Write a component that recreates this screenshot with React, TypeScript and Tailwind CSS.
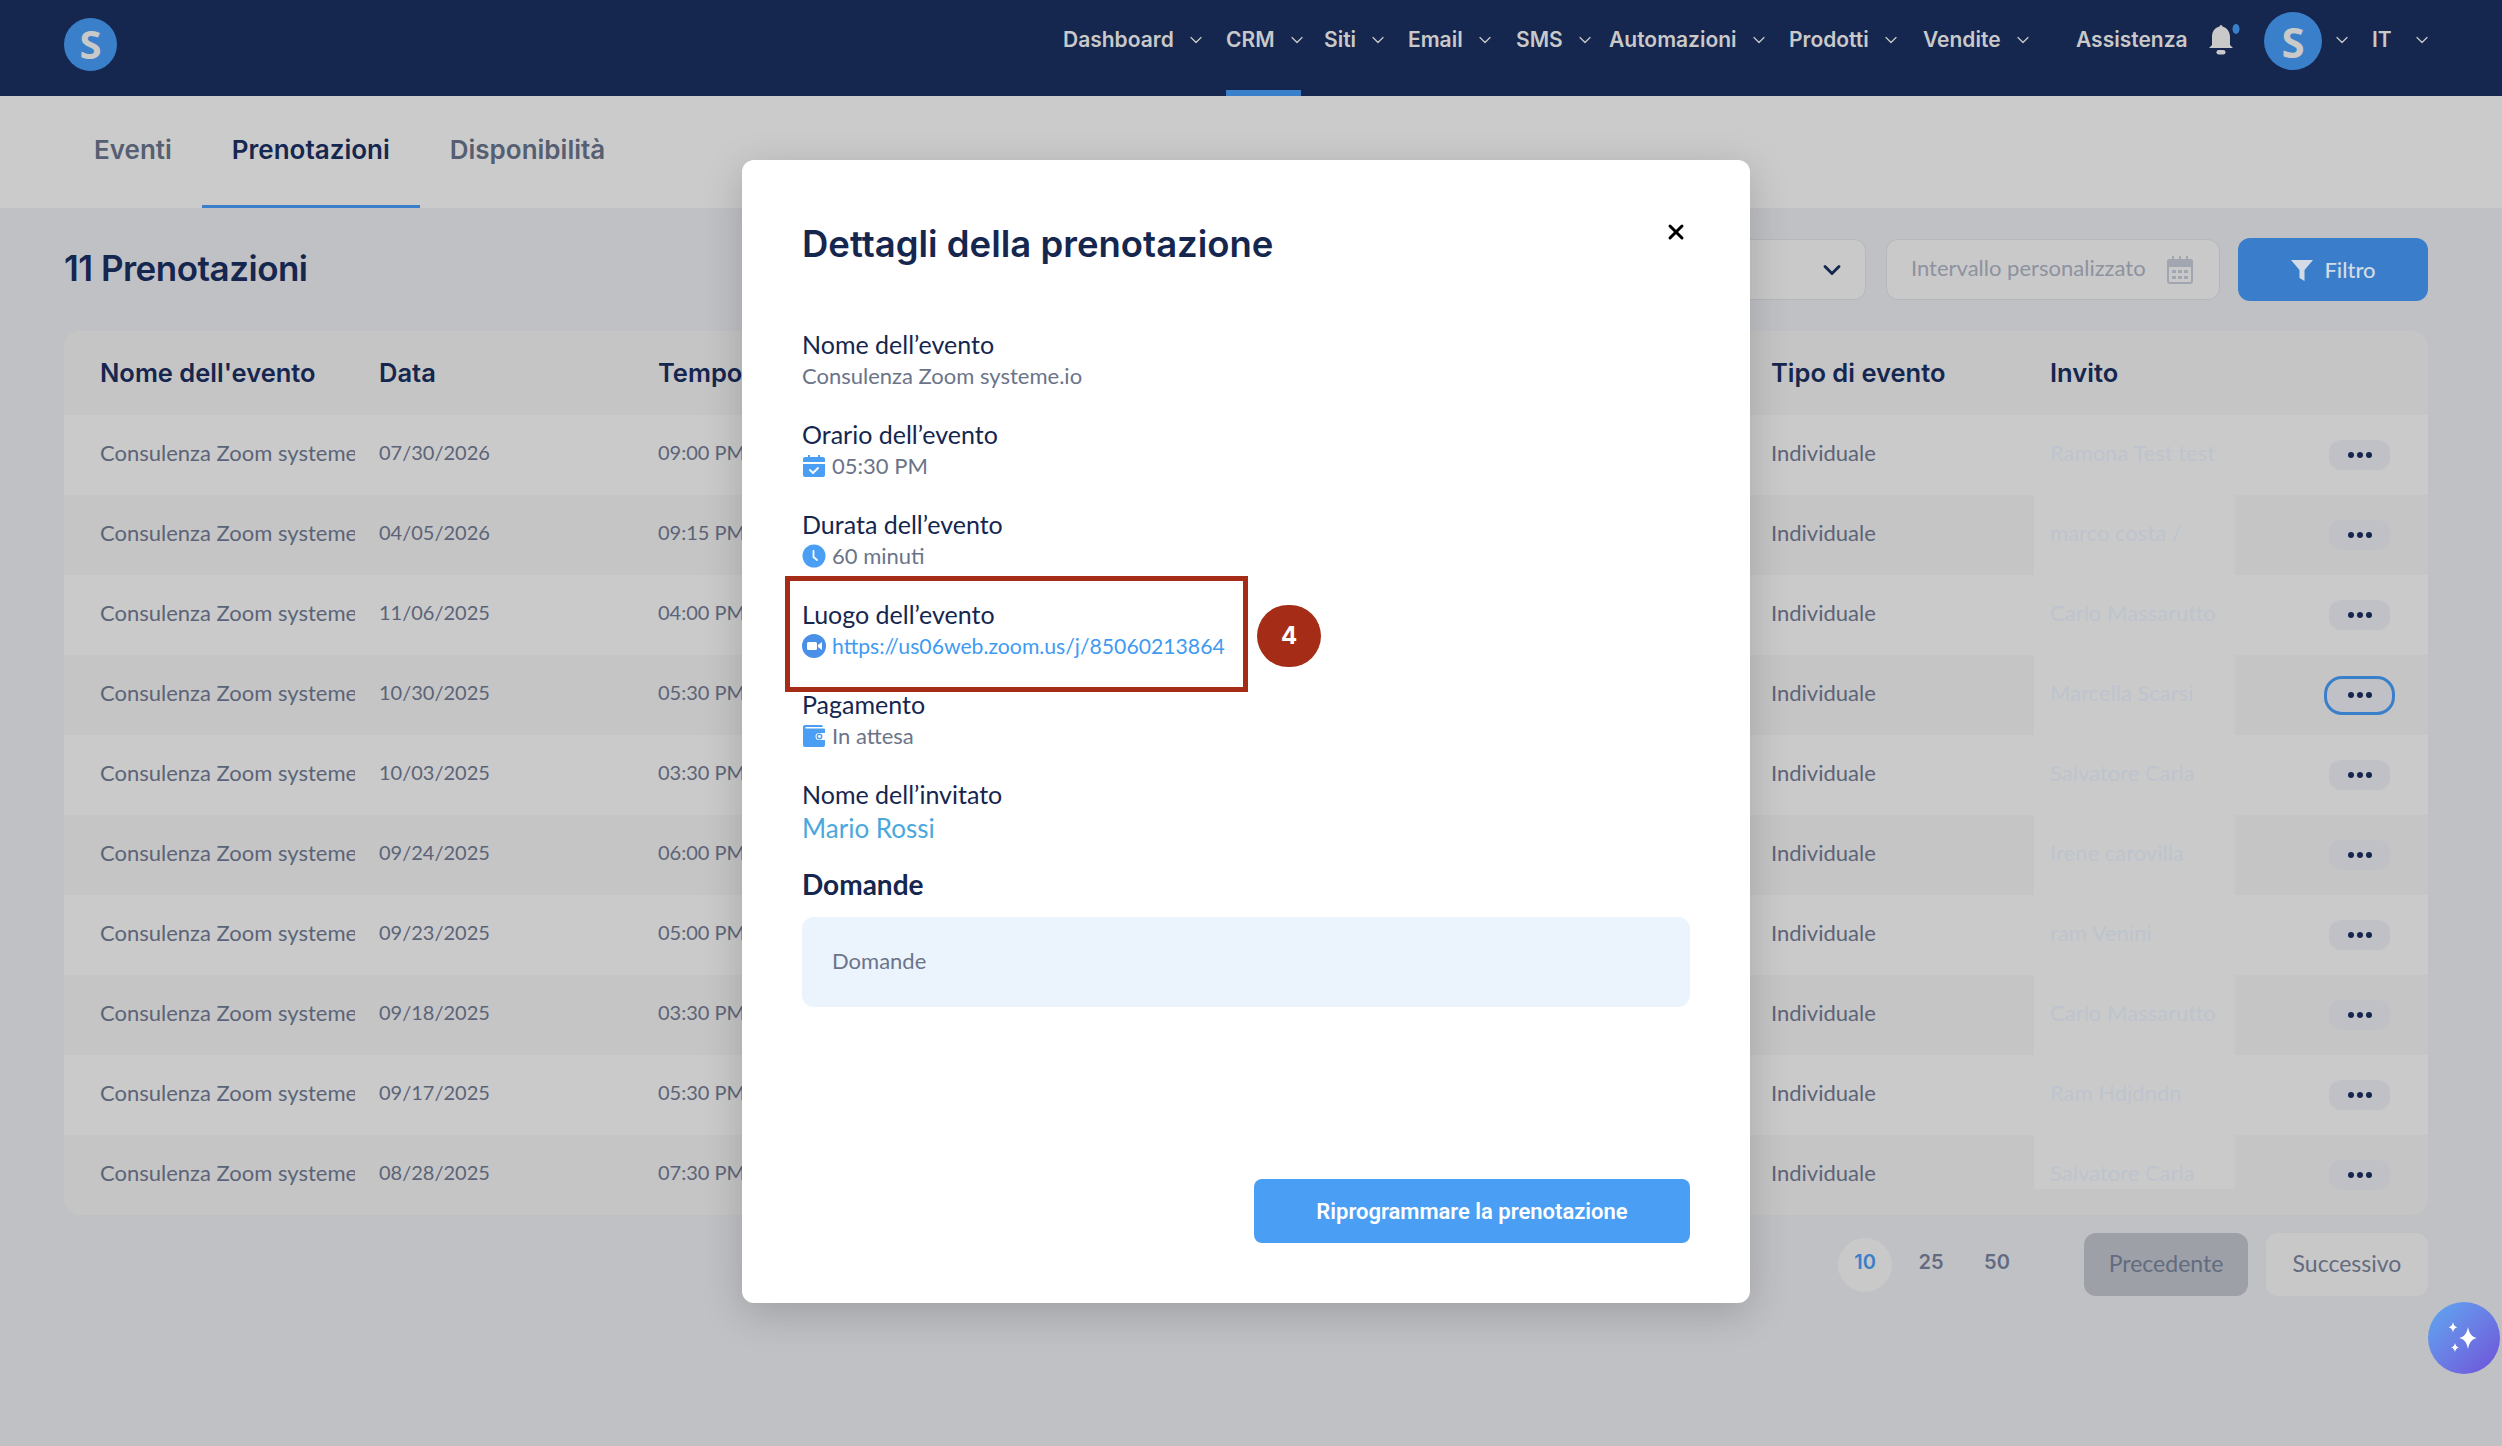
import React from "react";
import { ChevronDown, X } from "lucide-react";

const navItems = [
  { label: "Dashboard", width: "w-[163px]" },
  { label: "CRM", width: "w-[98px]", active: true },
  { label: "Siti", width: "w-[84px]" },
  { label: "Email", width: "w-[108px]" },
  { label: "SMS", width: "w-[93px]" },
  { label: "Automazioni", width: "w-[180px]" },
  { label: "Prodotti", width: "w-[134px]" },
  { label: "Vendite", width: "w-[153px]" },
];

const rows = [
  { date: "07/30/2026", time: "09:00 PM", guest: "Ramona Test test" },
  { date: "04/05/2026", time: "09:15 PM", guest: "marco costa /" },
  { date: "11/06/2025", time: "04:00 PM", guest: "Carlo Massarutto" },
  { date: "10/30/2025", time: "05:30 PM", guest: "Marcella Scarsi", focused: true },
  { date: "10/03/2025", time: "03:30 PM", guest: "Salvatore Carla" },
  { date: "09/24/2025", time: "06:00 PM", guest: "Irene carovilla" },
  { date: "09/23/2025", time: "05:00 PM", guest: "ram Venini" },
  { date: "09/18/2025", time: "03:30 PM", guest: "Carlo Massarutto" },
  { date: "09/17/2025", time: "05:30 PM", guest: "Ram Hdjdndn" },
  { date: "08/28/2025", time: "07:30 PM", guest: "Salvatore Carla" },
];

const rowGrid = "grid grid-cols-[315px_279px_1113px_263px_201px_1fr]";
const heading = "font-['Inter',sans-serif]";

function CalendarCheck() {
  return (
    <svg viewBox="0 0 24 24" className="w-[24px] h-[24px] shrink-0">
      <path d="M6 1h2v3H6zM16 1h2v3h-2z" fill="#4a9ff5" />
      <path d="M3 3h18a2 2 0 0 1 2 2v3H1V5a2 2 0 0 1 2-2z" fill="#4a9ff5" />
      <path d="M1 10h22v11a2 2 0 0 1-2 2H3a2 2 0 0 1-2-2z" fill="#4a9ff5" />
      <path d="M8 16l3 3 5-5" fill="none" stroke="#fff" strokeWidth="1.8" strokeLinecap="round" strokeLinejoin="round" />
    </svg>
  );
}

function ClockIcon() {
  return (
    <svg viewBox="0 0 24 24" className="w-[24px] h-[24px] shrink-0">
      <circle cx="12" cy="12" r="11.5" fill="#4a9ff5" />
      <path d="M11.5 7v6l3.5 3" fill="none" stroke="#fff" strokeWidth="1.8" strokeLinecap="round" strokeLinejoin="round" />
    </svg>
  );
}

function ZoomIcon() {
  return (
    <svg viewBox="0 0 24 24" className="w-[24px] h-[24px] shrink-0">
      <circle cx="12" cy="12" r="12" fill="#4a90e8" />
      <rect x="5" y="8" width="10" height="8" rx="1.5" fill="#fff" />
      <path d="M16 11l4-3v8l-4-3z" fill="#fff" />
    </svg>
  );
}

function WalletIcon() {
  return (
    <svg viewBox="0 0 24 24" className="w-[24px] h-[24px] shrink-0">
      <path d="M3 1h16a2 2 0 0 1 2 2H3.500v1.500H22a1 1 0 0 1 1 1V9h-6a3.500 3.500 0 0 0 0 7h6v5a2 2 0 0 1-2 2H3a2 2 0 0 1-2-2V3a2 2 0 0 1 2-2z" fill="#4a9ff5" />
      <circle cx="17.500" cy="12.500" r="2.200" fill="none" stroke="#4a9ff5" strokeWidth="1.500" />
    </svg>
  );
}

function BellIcon() {
  return (
    <svg viewBox="0 0 32 32" className="w-[32px] h-[32px] shrink-0 mb-[18px]">
      <path d="M11.500 3.500C6 5 4 9 4 14v8l-3 3h24l-3-3v-8c0-5-2.500-9-7.500-10.500a1.300 1.300 0 0 0-3 0z" fill="#c9c9c9" />
      <rect x="8.500" y="27" width="9" height="4.500" rx="2.200" fill="#c9c9c9" />
      <ellipse cx="28" cy="6" rx="3.500" ry="5" fill="#3a7fca" />
    </svg>
  );
}

function DateIcon() {
  return (
    <svg viewBox="0 0 30 30" className="w-[30px] h-[30px] shrink-0">
      <path d="M7 1h2v5H7zM14 1h2v5h-2zM21 1h2v5h-2z" fill="#a2a6b0" />
      <path d="M4 4h22a2 2 0 0 1 2 2v5H2V6a2 2 0 0 1 2-2z" fill="#a2a6b0" />
      <path d="M3 11h24v15a2 2 0 0 1-2 2H5a2 2 0 0 1-2-2z" fill="none" stroke="#a2a6b0" strokeWidth="2" />
      <path d="M7 15h4v3H7zM13 15h4v3h-4zM19 15h4v3h-4zM7 21h4v3H7zM13 21h4v3h-4zM19 21h4v3h-4z" fill="#a2a6b0" />
    </svg>
  );
}

function Sparkles() {
  return (
    <svg viewBox="0 0 40 40" className="w-[40px] h-[40px]">
      <path d="M24 9c1.500 7 3.500 9.500 9 11-5.500 1.500-7.500 4-9 11-1.500-7-3.500-9.500-9-11 5.500-1.500 7.500-4 9-11z" fill="#fff" />
      <path d="M9 4c.8 3.500 1.800 4.500 4.500 5.200C10.800 10 9.800 11 9 14.500 8.200 11 7.200 10 4.500 9.200 7.200 8.500 8.200 7.500 9 4z" fill="#fff" />
      <path d="M11 25c.7 3 1.500 3.800 4 4.500-2.500.7-3.300 1.500-4 4.500-.7-3-1.500-3.800-4-4.500 2.500-.7 3.300-1.500 4-4.500z" fill="#fff" />
    </svg>
  );
}

function Dots() {
  return (
    <>
      <span className="w-[6px] h-[6px] rounded-full bg-[#15264f]" />
      <span className="w-[6px] h-[6px] rounded-full bg-[#15264f]" />
      <span className="w-[6px] h-[6px] rounded-full bg-[#15264f]" />
    </>
  );
}

function Detail({ label, children }: { label: string; children: React.ReactNode }) {
  return (
    <div className="mb-[26px]">
      <div className="text-[25px] leading-[32px] text-[#15264f]">{label}</div>
      {children}
    </div>
  );
}

function DetailValue({ icon, children, className = "text-[22px] text-[#6b7489]" }: { icon?: React.ReactNode; children: React.ReactNode; className?: string }) {
  return (
    <div className={"flex items-center gap-[6px] leading-[32px] " + className}>
      {icon}
      <span>{children}</span>
    </div>
  );
}

export default function App() {
  return (
    <div className="relative w-[2502px] h-[1446px] overflow-hidden bg-[#c0c1c5] font-['Lato',sans-serif]">
      <header className="h-[96px] bg-[#15264f] flex items-center pl-[64px] text-[#c9c9c9]">
        <div className="w-[53px] h-[53px] mb-[8px] rounded-full bg-[#3a7fca] flex items-center justify-center text-[40px] font-bold text-[#c9c9c9] font-['Open_Sans',sans-serif]">S</div>
        <nav className={"ml-[946px] flex h-full text-[21px] font-semibold " + heading}>
          {navItems.map((item) => (
            <div key={item.label} className={"relative flex items-center gap-[12px] pb-[16px] " + item.width}>
              <span>{item.label}</span>
              <ChevronDown size={20} strokeWidth={1.5} />
              {item.active && <div className="absolute bottom-0 left-0 w-[75px] h-[6px] bg-[#3a7fca]" />}
            </div>
          ))}
        </nav>
        <span className={"w-[132px] pb-[16px] text-[21px] font-semibold " + heading}>Assistenza</span>
        <BellIcon />
        <div className="ml-[24px] w-[58px] h-[58px] mb-[14px] rounded-full bg-[#3a7fca] flex items-center justify-center text-[42px] font-bold font-['Open_Sans',sans-serif]">S</div>
        <ChevronDown className="ml-[10px] mb-[16px]" size={20} strokeWidth={1.5} />
        <span className={"ml-[20px] pb-[16px] text-[21px] font-semibold " + heading}>IT</span>
        <ChevronDown className="ml-[20px] mb-[16px]" size={20} strokeWidth={1.5} />
      </header>

      <div className={"h-[112px] bg-[#cbcbcb] flex pl-[64px] text-[26px] font-semibold text-[#565f72] " + heading}>
        <div className="h-full px-[30px] flex items-center pb-[6px]">Eventi</div>
        <div className="h-full px-[30px] flex items-center pb-[3px] border-b-[3px] border-[#3a7fca] text-[#15264f]">Prenotazioni</div>
        <div className="h-full px-[30px] flex items-center pb-[6px]">Disponibilità</div>
      </div>

      <main className="pl-[64px] pr-[74px]">
        <div className="h-[123px] flex items-center justify-between">
          <h1 className={"pb-[3px] text-[35px] font-semibold tracking-[-0.5px] text-[#15264f] " + heading}>11 Prenotazioni</h1>
          <div className="flex items-center">
            <div className="w-[200px] h-[61px] mr-[20px] rounded-xl border border-[#b5b7bd] bg-[#c9c9c9] flex items-center justify-end pr-[19px]">
              <ChevronDown size={28} strokeWidth={2.5} className="text-[#15264f]" />
            </div>
            <div className="w-[334px] h-[61px] mr-[18px] rounded-xl border border-[#b5b7bd] bg-[#c9c9c9] flex items-center justify-between pl-[24px] pr-[24px] text-[22px] text-[#8d92a0]">
              <span className="pb-[4px]">Intervallo personalizzato</span>
              <DateIcon />
            </div>
            <div className="w-[190px] h-[63px] rounded-xl bg-[#3a7ecb] flex items-center justify-center gap-[10px] text-[22px] text-[#d5dbe6] font-medium">
              <svg viewBox="0 0 24 24" className="w-[24px] h-[24px]">
                <path d="M1 2h22l-8.500 10v11l-5-3v-8z" fill="#d5dbe6" />
              </svg>
              <span>Filtro</span>
            </div>
          </div>
        </div>

        <div className="rounded-2xl overflow-hidden">
          <div className={rowGrid + " h-[84px] items-center bg-[#c5c5c5] text-[25.500px] font-semibold text-[#15264f] " + heading}>
            <div className="pl-[36px]">Nome dell'evento</div>
            <div>Data</div>
            <div>Tempo</div>
            <div>Tipo di evento</div>
            <div className="col-span-2 pl-4">Invito</div>
          </div>
          {rows.map((row, i) => {
            const even = i % 2 === 1;
            return (
              <div key={i} className={rowGrid + " h-[80px] items-center text-[22px] text-[#5b6478] " + (even ? "bg-[#c5c5c5]" : "bg-[#cacaca]")}>
                <div className="pl-[36px] pb-[6px]">
                  <div className="w-[255px] overflow-hidden whitespace-nowrap">Consulenza Zoom systeme.io</div>
                </div>
                <div className="pb-[6px] text-[20px]">{row.date}</div>
                <div className="pb-[6px] text-[20px]">{row.time}</div>
                <div className="pb-[6px]">Individuale</div>
                <div className={"self-start pl-4 pt-[21px] text-[#bdc4ce] bg-[#cacaca] " + (i === 9 ? "h-[54px]" : "h-[80px]")}>{row.guest}</div>
                <div className="flex justify-end pr-[38px]">
                  {row.focused ? (
                    <div className="w-[71px] h-[39px] -mr-[5px] rounded-[18px] border-[3px] border-[#3a7fca] bg-[#c0c1c7] flex items-center justify-center gap-[3px]">
                      <Dots />
                    </div>
                  ) : (
                    <div className="w-[61px] h-[30px] rounded-xl bg-[#c0c1c7] flex items-center justify-center gap-[3px]">
                      <Dots />
                    </div>
                  )}
                </div>
              </div>
            );
          })}
        </div>

        <div className="mt-[18px] flex items-center justify-end">
          <div className={"w-[54px] h-[54px] pb-[5px] rounded-full bg-[#c9c9c9] flex items-center justify-center text-[20px] font-semibold text-[#3a7fca] " + heading}>10</div>
          <div className={"ml-[12px] w-[54px] pb-[5px] text-center text-[20px] font-semibold text-[#636b80] " + heading}>25</div>
          <div className={"ml-[12px] w-[54px] pb-[5px] text-center text-[20px] font-semibold text-[#636b80] " + heading}>50</div>
          <div className="ml-[60px] w-[164px] h-[63px] pb-[2px] rounded-xl bg-[#9da0a7] flex items-center justify-center text-[23px] text-[#636b80]">Precedente</div>
          <div className="ml-[18px] w-[162px] h-[63px] pb-[2px] rounded-xl bg-[#c8c8c8] flex items-center justify-center text-[23px] text-[#636b80]">Successivo</div>
        </div>
      </main>

      {/* chat button sits over the page */}
      <div className="absolute left-[2428px] top-[1302px] w-[72px] h-[72px] rounded-full bg-gradient-to-br from-[#5ca8f0] to-[#6e4fd8] flex items-center justify-center">
        <Sparkles />
      </div>

      {/* modal */}
      <div className="absolute left-[742px] top-[160px] w-[1008px] h-[1143px] rounded-xl bg-white shadow-[0_10px_40px_rgba(0,0,0,0.18)] px-[60px] pt-[62px] pb-[60px] flex flex-col">
        <h2 className={"text-[36.500px] leading-[44px] font-semibold text-[#15264f] " + heading}>Dettagli della prenotazione</h2>
        <X className="absolute top-[60px] right-[62px] text-black" size={24} strokeWidth={3} />

        <div className="mt-[62px]">
          <Detail label="Nome dell’evento">
            <DetailValue>Consulenza Zoom systeme.io</DetailValue>
          </Detail>
          <Detail label="Orario dell’evento">
            <DetailValue icon={<CalendarCheck />}>05:30 PM</DetailValue>
          </Detail>
          <Detail label="Durata dell’evento">
            <DetailValue icon={<ClockIcon />}>60 minuti</DetailValue>
          </Detail>
          <Detail label="Luogo dell’evento">
            <DetailValue icon={<ZoomIcon />} className="text-[21.200px] text-[#3f9bf2]">https://us06web.zoom.us/j/85060213864</DetailValue>
          </Detail>
          <Detail label="Pagamento">
            <DetailValue icon={<WalletIcon />}>In attesa</DetailValue>
          </Detail>
          <div className="text-[25px] leading-[32px] text-[#15264f]">Nome dell’invitato</div>
          <div className="mt-[2px] text-[26px] leading-[32px] text-[#4aa8dc]">Mario Rossi</div>
        </div>

        <div className="mt-[24px] text-[28px] leading-[32px] font-bold text-[#15264f]">Domande</div>
        <div className="mt-[17px] h-[90px] pb-[4px] rounded-xl bg-[#ebf3fd] flex items-center pl-[30px] text-[22px] text-[#6b7489]">Domande</div>

        <div className="mt-auto self-end w-[436px] h-[64px] rounded-lg bg-[#4a9ff5] flex items-center justify-center text-[22px] font-semibold text-white font-['Roboto',sans-serif]">
          Riprogrammare la prenotazione
        </div>

        {/* annotation */}
        <div className="absolute left-[43px] top-[416px] w-[463px] h-[116px] border-[5px] border-[#a52c17]" />
        <div className="absolute left-[515px] top-[445px] w-[64px] h-[62px] rounded-full bg-[#a52c17] flex items-center justify-center text-[24px] font-bold text-white font-['Inter',sans-serif]">4</div>
      </div>
    </div>
  );
}
